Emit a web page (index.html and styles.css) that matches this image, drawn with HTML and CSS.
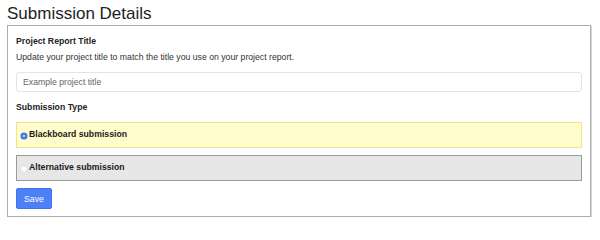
FILE: index.html
```html
<!DOCTYPE html>
<html lang="en">
<head>
<meta charset="utf-8">
<title>Submission Details</title>
<link rel="stylesheet" href="styles.css">
</head>
<body>
<h1 class="page-title">Submission Details</h1>
<section class="panel">
  <div class="field-label">Project Report Title</div>
  <p class="field-help">Update your project title to match the title you use on your project report.</p>
  <input class="text-input" type="text" placeholder="Example project title">
  <div class="field-label section-gap">Submission Type</div>
  <label class="option option-selected">
    <span class="radio radio-checked"></span>
    <span class="option-text">Blackboard submission</span>
  </label>
  <label class="option option-alt">
    <span class="radio"></span>
    <span class="option-text">Alternative submission</span>
  </label>
  <button class="save-btn" type="button">Save</button>
</section>
</body>
</html>
```
FILE: styles.css
```css
html, body {
  margin: 0;
  padding: 0;
  background: #ffffff;
}
body {
  padding: 0 9px 0 7px;
  font-family: "Liberation Sans", Arial, sans-serif;
  color: #222;
}
.page-title {
  margin: 2px 0 0 0;
  font-size: 17px;
  line-height: 23px;
  font-weight: normal;
  color: #1e1e1e;
}
.panel {
  border: 1px solid #adadad;
  box-shadow: 1px 1px 0 #d6d6d6;
  padding: 9px 8px 7px 8px;
  display: flex;
  flex-direction: column;
  align-items: flex-start;
}
.field-label {
  font-size: 8.7px;
  line-height: 12px;
  font-weight: bold;
  color: #222;
}
.section-gap {
  margin-top: 9px;
}
.field-help {
  margin: 4px 0 0 0;
  font-size: 8.7px;
  line-height: 12px;
  color: #333;
}
.text-input {
  margin-top: 9px;
  box-sizing: border-box;
  width: 100%;
  height: 20px;
  border: 1px solid #e4e4e4;
  border-radius: 3px;
  padding: 0 6px;
  font-family: "Liberation Sans", Arial, sans-serif;
  font-size: 8.7px;
  color: #333;
  background: #fff;
  outline: none;
}
.text-input::placeholder {
  color: #666;
}
.option {
  box-sizing: border-box;
  width: 100%;
  height: 26px;
  display: flex;
  align-items: center;
  padding: 0 0 2px 4px;
  gap: 2px;
  font-size: 8.7px;
  font-weight: bold;
  color: #1a1a1a;
}
.option-selected {
  margin-top: 9px;
  background: #fffdcc;
  border: 1px solid #f3e38a;
}
.option-alt {
  margin-top: 7px;
  background: #e7e7e7;
  border: 1px solid #9a9a9a;
}
.radio {
  width: 6px;
  height: 6px;
  border-radius: 50%;
  background: #fbfbfb;
  box-shadow: 0 0 0 0.5px #d0d0d0;
  flex: none;
  margin-top: 3px;
  position: relative;
}
.radio-checked {
  background: #3f7ff0;
  box-shadow: 0 0 0 0.5px #3a6fd6;
}
.radio-checked::after {
  content: "";
  position: absolute;
  left: 2px;
  top: 2px;
  width: 2px;
  height: 2px;
  border-radius: 50%;
  background: #dfe9ff;
}
.save-btn {
  margin-top: 7px;
  height: 21px;
  padding: 0 7px;
  border: 1px solid #3e74ea;
  border-radius: 2px;
  background: #4b80f6;
  color: #fff;
  font-family: "Liberation Sans", Arial, sans-serif;
  font-size: 8.7px;
  cursor: pointer;
}
```
